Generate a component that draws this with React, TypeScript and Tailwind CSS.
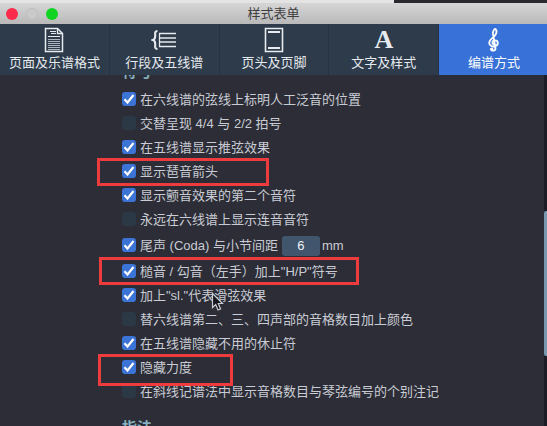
import React, { useState } from "react";
import type { ReactNode } from "react";

interface Tab {
  id: string;
  label: string;
  icon: ReactNode;
}

interface Option {
  id: string;
  label: string;
  checked: boolean;
  // size and position of the red marker around the row
  mark?: string;
  unit?: string;
  pointer?: boolean;
}

function PageIcon() {
  return (
    <svg width="20" height="26" viewBox="0 0 20 26" fill="none" stroke="currentColor">
      <path d="M1.5 1.5h12l5 5v18h-17z" strokeWidth="1.5" />
      <path d="M13.5 1.5v5h5" strokeWidth="1.3" />
      <path d="M6 4.5h6M7 6.5h5M4 9.5h12" strokeWidth="1.2" />
      <path d="M4 12.5h12M4 14.5h12M4 16.5h12M4 18.5h12M4 20.5h12M4 22.5h12" strokeWidth="1" opacity="0.7" />
    </svg>
  );
}

function StaffIcon() {
  return (
    <svg width="26" height="26" viewBox="0 0 26 26" fill="none" stroke="currentColor">
      <path d="M6.5 4C4 4 4 5.5 4.2 8C4.4 11 4 12.3 2 13C4 13.7 4.4 15 4.2 18C4 20.5 4 22 6.5 22" strokeWidth="2.1" />
      <path d="M25 6.5H8.5v13H25M8.5 11H25M8.5 15H25" strokeWidth="1.3" />
    </svg>
  );
}

function HeaderIcon() {
  return (
    <svg width="20" height="26" viewBox="0 0 20 26" fill="none" stroke="currentColor">
      <path d="M1.5 1.5h17v23h-17z" strokeWidth="1.6" />
      <path d="M4 5h12M4 21h12" strokeWidth="1.8" />
    </svg>
  );
}

function ClefIcon() {
  return (
    <svg width="14" height="26" viewBox="0 0 14 26" fill="none" stroke="currentColor" strokeLinecap="round">
      <path d="M8.5 21.5C8.5 24 4.5 24.5 4 22.2M8.5 21.5L6 7C5.5 3.5 8 1.5 8.6 2C10 4 9.5 7 7 9.5C4 12 2 13.5 2.2 16.2C2.5 19 5.5 20 8.2 19.2C12 18 11.5 13.3 8 13.3C5 13.3 4.5 16.3 6.5 17.3" strokeWidth="1.8" />
      <circle cx="4.8" cy="22" r="1.6" fill="currentColor" stroke="none" />
    </svg>
  );
}

function Pointer() {
  return (
    <svg className="pointer-events-none absolute top-2 left-[89px]" width="13" height="20" viewBox="0 0 13 20">
      <path d="M1.5 1.5v14l3.2-3 2.3 5.5 2.6-1.1-2.3-5.4h4.2z" fill="#15161c" stroke="#c9cbd2" strokeWidth="1.2" />
    </svg>
  );
}

const tabs: Tab[] = [
  { id: "page", label: "页面及乐谱格式", icon: <PageIcon /> },
  { id: "staff", label: "行段及五线谱", icon: <StaffIcon /> },
  { id: "header", label: "页头及页脚", icon: <HeaderIcon /> },
  {
    id: "text",
    label: "文字及样式",
    icon: <span className="font-['Liberation_Serif',serif] text-[26px] leading-6 font-bold">A</span>,
  },
  { id: "notation", label: "编谱方式", icon: <ClefIcon /> },
];

const initialOptions: Option[] = [
  { id: "harmonic", label: "在六线谱的弦线上标明人工泛音的位置", checked: true },
  { id: "meter", label: "交替呈现 4/4 与 2/2 拍号", checked: false },
  { id: "bend", label: "在五线谱显示推弦效果", checked: true },
  { id: "arpeggio", label: "显示琶音箭头", checked: true, mark: "-left-[25px] -top-0.5 w-[172px] h-7" },
  { id: "trill", label: "显示颤音效果的第二个音符", checked: true },
  { id: "tie", label: "永远在六线谱上显示连音音符", checked: false },
  { id: "coda", label: "尾声 (Coda) 与小节间距", checked: true, unit: "mm" },
  { id: "hopo", label: "槌音 / 勾音（左手）加上\"H/P\"符号", checked: true, mark: "-left-[23px] -top-[3px] w-[260px] h-7" },
  { id: "slide", label: "加上\"sl.\"代表滑弦效果", checked: true, pointer: true },
  { id: "color", label: "替六线谱第二、三、四声部的音格数目加上颜色", checked: false },
  { id: "rest", label: "在五线谱隐藏不用的休止符", checked: true },
  { id: "dynamic", label: "隐藏力度", checked: true, mark: "-left-6 -top-0.5 w-[135px] h-8" },
  { id: "slash", label: "在斜线记谱法中显示音格数目与琴弦编号的个别注记", checked: false },
];

interface OptionRowProps {
  option: Option;
  onToggle: () => void;
}

function OptionRow({ option, onToggle }: OptionRowProps) {
  const [distance, setDistance] = useState("6");

  return (
    <li className={`relative flex items-center ${option.unit ? "h-7" : "h-6"}`}>
      <span className="mr-1 grid shrink-0 pb-0.5">
        <input
          id={option.id}
          type="checkbox"
          checked={option.checked}
          onChange={onToggle}
          className="peer col-start-1 row-start-1 size-3.5 appearance-none rounded-[3px] bg-[#2b3846] checked:bg-[#3b74d6]"
        />
        <svg
          className="pointer-events-none invisible col-start-1 row-start-1 size-3.5 text-white peer-checked:visible"
          viewBox="0 0 14 14"
          fill="none"
          stroke="currentColor"
          strokeWidth="2.2"
        >
          <path d="M2.5 7.3l3 3.2 6-7.5" />
        </svg>
      </span>
      <label htmlFor={option.id} className="whitespace-nowrap">{option.label}</label>
      {option.unit && (
        <>
          <input
            type="text"
            aria-label={option.label}
            value={distance}
            onChange={(e) => setDistance(e.target.value)}
            className="ml-1 h-5 w-[38px] rounded-[3px] bg-[#41566d] text-center text-[#eef1f5]"
          />
          <span className="ml-0.5">{option.unit}</span>
        </>
      )}
      {option.mark && <span className={`pointer-events-none absolute z-10 border-3 border-[#ee3b3d] ${option.mark}`} />}
      {option.pointer && <Pointer />}
    </li>
  );
}

export default function App() {
  const [activeTab, setActiveTab] = useState("notation");
  const [options, setOptions] = useState<Option[]>(initialOptions);

  function toggle(id: string) {
    setOptions((prev) => prev.map((o) => (o.id === id ? { ...o, checked: !o.checked } : o)));
  }

  return (
    <div className="flex h-screen flex-col overflow-hidden bg-[#2c2d36] font-['Liberation_Sans','Noto_Sans_CJK_SC',sans-serif] text-[13px] leading-5 text-[#c9ccd4]">
      <div className="flex h-[3px] shrink-0">
        <div className="w-[72%] bg-[#e4e4e4]" />
        <div className="flex-1 bg-[#292a30]" />
      </div>

      <header className="grid h-[21px] shrink-0 grid-cols-[1fr_auto_1fr] items-center bg-linear-to-b from-[#d6d6d6] to-[#b9b9b9] text-[#3f3f3f]">
        <div className="flex gap-2 pl-1.5">
          <button aria-label="关闭" className="size-3 rounded-full bg-[#fc2a4b]" />
          <button aria-label="最小化" className="size-3 rounded-full border border-[#bcbcbc] bg-[#cacaca]" />
          <button aria-label="缩放" className="size-3 rounded-full bg-[#10d322]" />
        </div>
        <h1>样式表单</h1>
      </header>

      <nav className="z-20 -mr-0.5 grid h-[51px] shrink-0 grid-cols-5 bg-[#2d3b4a] text-[#e6eaef]">
        {tabs.map((tab) => (
          <button
            key={tab.id}
            onClick={() => setActiveTab(tab.id)}
            className={`flex flex-col items-center whitespace-nowrap ${
              activeTab === tab.id ? "bg-[#3871d8] text-white" : "border-r border-[#263341]"
            }`}
          >
            <span className="flex h-[29px] items-center pt-0.5">{tab.icon}</span>
            <span>{tab.label}</span>
          </button>
        ))}
      </nav>

      <div className="flex min-h-0 flex-1">
        <main className="min-w-0 flex-1 overflow-hidden pl-[122px]">
          <h2 className="-mt-[15px] mb-1 h-6 text-[15px] leading-6 font-bold text-[#86b0bf]">符号</h2>
          <ul>
            {options.map((option) => (
              <OptionRow key={option.id} option={option} onToggle={() => toggle(option.id)} />
            ))}
          </ul>
          <h2 className="mt-3 h-6 text-[15px] leading-6 font-bold text-[#86b0bf]">指法</h2>
        </main>
        <div className="flex w-[3px] flex-col bg-[#1b1c25]">
          <div className="flex-[136]" />
          <div className="flex-[145] rounded-l-xs bg-[#7898b0]" />
          <div className="flex-[70]" />
        </div>
      </div>
    </div>
  );
}
